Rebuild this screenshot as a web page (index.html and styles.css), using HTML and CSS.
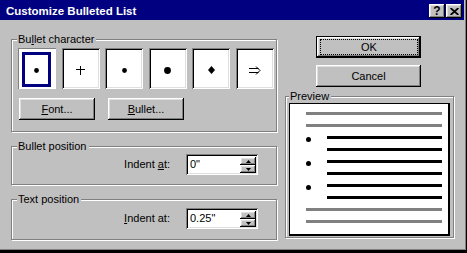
FILE: index.html
```html
<!DOCTYPE html>
<html>
<head>
<meta charset="utf-8">
<link rel="stylesheet" href="styles.css">
</head>
<body>
<div class="window">
  <div class="titlebar">
    <span class="title">Customize Bulleted List</span>
    <div class="caption-btns">
      <span class="cbtn help">?</span>
      <span class="cbtn close"><svg width="9" height="7" viewBox="0 0 9 7"><path d="M0.6 0 L8.4 7 M8.4 0 L0.6 7" stroke="#000" stroke-width="1.7"/></svg></span>
    </div>
  </div>
  <div class="main">
    <div class="left">
      <div class="group g-char">
        <div class="legend">Bu<u>l</u>let character</div>
        <div class="boxes">
          <div class="box selected"><div class="sel-frame"><svg width="5" height="5" viewBox="0 0 5 5"><circle cx="2.5" cy="2.5" r="2.4"/></svg></div></div>
          <div class="box"><svg width="9" height="9" viewBox="0 0 9 9"><path d="M4.5 0V9M0 3.5H9" stroke="#000" stroke-width="1"/></svg></div>
          <div class="box"><svg width="5" height="5" viewBox="0 0 5 5"><circle cx="2.5" cy="2.5" r="2.4"/></svg></div>
          <div class="box"><svg width="7" height="7" viewBox="0 0 7 7"><circle cx="3.5" cy="3.5" r="3.4"/></svg></div>
          <div class="box"><svg width="7" height="8" viewBox="0 0 7 8"><path d="M3.5 0 L7 4 L3.5 8 L0 4Z"/></svg></div>
          <div class="box"><svg width="12" height="9" viewBox="0 0 12 9"><path d="M0 2.5H9.5M0 6.5H9.5M7 0.5L11 4.5L7 8.5" stroke="#000" stroke-width="1" fill="none"/></svg></div>
        </div>
        <div class="btn-row">
          <div class="btn w76"><span><u>F</u>ont...</span></div>
          <div class="btn w76"><span><u>B</u>ullet...</span></div>
        </div>
      </div>
      <div class="group g-pos">
        <div class="legend">Bullet position</div>
        <div class="indent-row">
          <span class="lbl">Indent <u>a</u>t:</span>
          <div class="spin-field">
            <span class="val">0"</span>
            <div class="spin">
              <div class="sb"><svg width="5" height="3" viewBox="0 0 5 3"><path d="M0 3H5L2.5 0Z"/></svg></div>
              <div class="sb"><svg width="5" height="3" viewBox="0 0 5 3"><path d="M0 0H5L2.5 3Z"/></svg></div>
            </div>
          </div>
        </div>
      </div>
      <div class="group g-text">
        <div class="legend">Text position</div>
        <div class="indent-row r2">
          <span class="lbl"><u>I</u>ndent at:</span>
          <div class="spin-field">
            <span class="val">0.25"</span>
            <div class="spin">
              <div class="sb"><svg width="5" height="3" viewBox="0 0 5 3"><path d="M0 3H5L2.5 0Z"/></svg></div>
              <div class="sb"><svg width="5" height="3" viewBox="0 0 5 3"><path d="M0 0H5L2.5 3Z"/></svg></div>
            </div>
          </div>
        </div>
      </div>
    </div>
    <div class="right">
      <div class="btn default dlg-btn"><span class="focus">OK</span></div>
      <div class="btn dlg-btn cancel"><span>Cancel</span></div>
      <div class="group preview-group">
        <div class="legend">Preview</div>
        <div class="preview">
          <div class="pl gray"></div>
          <div class="pl gray"></div>
          <div class="brow"><span class="pdot"></span><span class="bl"></span></div>
          <div class="pl blk"></div>
          <div class="brow"><span class="pdot"></span><span class="bl"></span></div>
          <div class="pl blk"></div>
          <div class="brow"><span class="pdot"></span><span class="bl"></span></div>
          <div class="pl blk"></div>
          <div class="pl gray"></div>
          <div class="pl gray"></div>
        </div>
      </div>
    </div>
  </div>
</div>
</body>
</html>
```
FILE: styles.css
```css
* { box-sizing: border-box; }
body {
  margin: 0;
  font-family: "Liberation Sans", Arial, sans-serif;
  font-size: 11px;
  color: #000;
}
.window {
  width: 467px;
  height: 253px;
  background: #c0c0c0;
  border-right: 1px solid #000;
  border-bottom: 3px solid #000;
  box-shadow: inset -1px -1px #808080;
  display: flex;
  flex-direction: column;
  overflow: hidden;
}
.titlebar {
  width: 464px;
  height: 20px;
  flex: none;
  background: #000080;
  display: flex;
  align-items: flex-start;
}
.title {
  color: #fff;
  font-weight: bold;
  font-size: 11.5px;
  line-height: 13px;
  margin: 5px 0 0 6px;
  white-space: nowrap;
}
.caption-btns {
  margin: 4px 2px 0 auto;
  display: flex;
  gap: 1px;
}
.cbtn {
  width: 16px;
  height: 14px;
  display: flex;
  align-items: center;
  justify-content: center;
  background: #c0c0c0;
  box-shadow: inset -1px -1px #000, inset 1px 1px #fff, inset -2px -2px #808080, inset 2px 2px #dfdfdf;
  font-weight: bold;
  font-size: 12px;
  line-height: 12px;
}
.cbtn svg { display: block; }
.main {
  display: flex;
  gap: 8px;
  padding-left: 11px;
}
.left {
  width: 266px;
  padding-top: 19px;
  display: flex;
  flex-direction: column;
}
.right {
  width: 169px;
  padding-top: 16px;
  display: flex;
  flex-direction: column;
  align-items: flex-start;
}
.group {
  border: 1px solid #808080;
  box-shadow: inset 1px 1px #fff, 1px 1px #fff;
  display: flex;
  flex-direction: column;
}
.legend {
  align-self: flex-start;
  margin: -7px 0 0 5px;
  padding: 0 2px 0 1px;
  height: 13px;
  line-height: 13px;
  background: #c0c0c0;
  white-space: nowrap;
}
.g-char {
  height: 93px;
}
.boxes {
  display: flex;
  justify-content: space-between;
  width: 256px;
  margin: 2px 0 0 6px;
}
.box {
  width: 38px;
  height: 41px;
  background: #fff;
  box-shadow: inset 1px 1px #808080, inset -1px -1px #fff, inset 2px 2px #000, inset -2px -2px #dfdfdf;
  display: flex;
  align-items: center;
  justify-content: center;
  padding-top: 3px;
}
.box svg { display: block; }
.box.selected {
  box-shadow: inset 1px 1px #808080, inset -1px -1px #fff;
  padding: 1px;
  align-items: stretch;
  justify-content: stretch;
}
.sel-frame {
  flex: 1;
  margin: 3px 4px 1px 3px;
  border: 3px solid #000080;
  display: flex;
  align-items: center;
  justify-content: center;
  padding-top: 2px;
}
.btn-row {
  display: flex;
  gap: 13px;
  margin: 9px 0 0 7px;
}
.btn {
  height: 22px;
  display: flex;
  align-items: center;
  justify-content: center;
  background: #c0c0c0;
  box-shadow: inset -1px -1px #000, inset 1px 1px #fff, inset -2px -2px #808080, inset 2px 2px #dfdfdf;
  line-height: 13px;
  white-space: nowrap;
}
.w76 { width: 76px; }
.dlg-btn {
  width: 105px;
  margin-left: 31px;
}
.btn.default {
  border: 1px solid #000;
  padding: 2px 2px 2px 3px;
  align-items: stretch;
}
.focus {
  flex: 1;
  border: 1px dotted #000;
  display: flex;
  align-items: center;
  justify-content: center;
}
.cancel { margin-top: 7px; }
.g-pos {
  margin-top: 14px;
  height: 39px;
}
.g-text {
  margin-top: 14px;
  height: 41px;
}
.indent-row {
  display: flex;
  justify-content: flex-end;
  align-items: center;
  gap: 16px;
  padding-right: 18px;
  margin-top: 1px;
}
.indent-row.r2 { margin-top: 2px; }
.lbl { line-height: 13px; white-space: nowrap; }
.spin-field {
  width: 72px;
  height: 21px;
  background: #fff;
  box-shadow: inset 1px 1px #808080, inset -1px -1px #fff, inset 2px 2px #000, inset -2px -2px #dfdfdf;
  padding: 2px;
  display: flex;
}
.val {
  flex: 1;
  padding-left: 2px;
  line-height: 17px;
}
.spin {
  width: 16px;
  margin-top: 1px;
  display: flex;
  flex-direction: column;
}
.sb {
  height: 8px;
  background: #c0c0c0;
  box-shadow: inset -1px -1px #000, inset 1px 1px #fff, inset -2px -2px #808080, inset 2px 2px #dfdfdf;
  display: flex;
  align-items: center;
  justify-content: center;
}
.sb svg { display: block; }
.preview-group {
  width: 169px;
  height: 142px;
  margin-top: 9px;
  padding: 0 3px 1px 3px;
}
.preview-group .legend { margin-left: 0; }
.preview {
  width: 161px;
  height: 133px;
  background: #fff;
  border-style: solid;
  border-color: #000;
  border-width: 1px 2px 2px 1px;
  padding: 8px 0 0 16px;
  display: flex;
  flex-direction: column;
  gap: 9px;
}
.pl { height: 3px; flex: none; }
.gray { width: 136px; background: #808080; }
.blk { width: 115px; margin-left: 21px; background: #000; }
.brow {
  height: 3px;
  flex: none;
  display: flex;
  align-items: flex-start;
}
.pdot {
  width: 5px;
  height: 5px;
  margin-top: 1px;
  border-radius: 50%;
  background: #000;
  flex: none;
}
.bl {
  width: 115px;
  height: 3px;
  margin-left: 16px;
  background: #000;
  flex: none;
}
```
